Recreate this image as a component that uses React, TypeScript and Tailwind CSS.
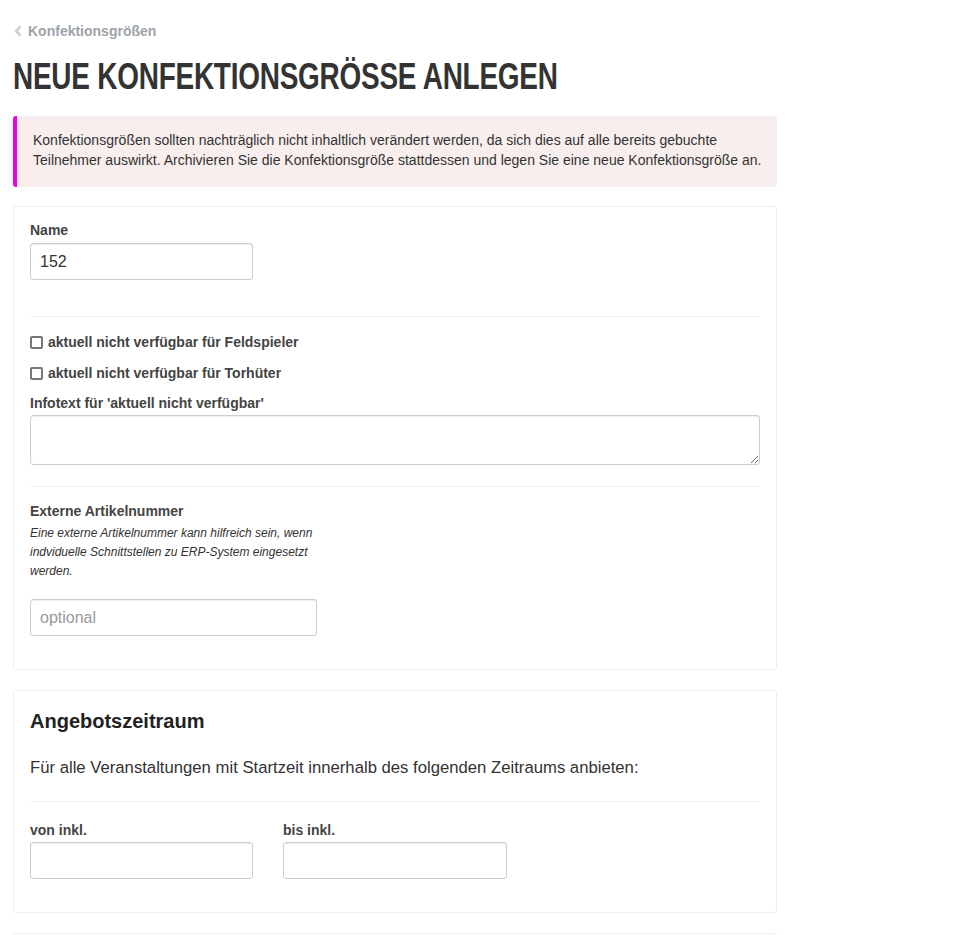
import React from 'react';

const font = { fontFamily: '"Liberation Sans", Arial, sans-serif' };

function Checkbox({ label }: { label: string }) {
  return (
    <label className="flex items-center h-5 text-sm font-bold text-[#444]">
      <span className="w-[13px] h-[13px] border-2 border-[#777] rounded-[2px] bg-white mr-[5px] shrink-0" />
      {label}
    </label>
  );
}

export default function App() {
  return (
    <div className="min-h-[935px] bg-white text-[#333]" style={font}>
      <div className="w-[764px] ml-[13px] pt-[21px]">
        <a className="flex items-center h-5 text-sm font-bold text-[#9ea3aa]">
          <svg width="9" height="12" viewBox="0 0 9 12" className="ml-px mr-[5px]">
            <path d="M6.5 1.5 L2.2 6 L6.5 10.5" fill="none" stroke="#d0d0d0" strokeWidth="2.6" />
          </svg>
          Konfektionsgrößen
        </a>

        <h1 className="mt-[11px] h-[48px] flex items-center text-[37px] font-bold text-[#333] leading-none whitespace-nowrap origin-left scale-x-[0.755] tracking-[-0.3px]">
          NEUE KONFEKTIONSGRÖSSE ANLEGEN
        </h1>

        <div className="mt-[16px] bg-[#f7eeed] border-l-4 border-[#f000e8] rounded-[3px] pl-[16px] pr-[6px] pt-[14px] pb-[17px] text-sm leading-5 text-[#333]">
          Konfektionsgrößen sollten nachträglich nicht inhaltlich verändert werden, da sich dies auf alle bereits gebuchte
          Teilnehmer auswirkt. Archivieren Sie die Konfektionsgröße stattdessen und legen Sie eine neue Konfektionsgröße an.
        </div>

        <div className="mt-[19px] border border-[#eeeeee] rounded-[3px] px-4 pt-[13px] pb-[33px]">
          <label className="block text-sm font-bold leading-5 text-[#444]">Name</label>
          <input
            defaultValue="152"
            className="mt-[3px] block w-[223px] h-[37px] border border-[#ccc] rounded-[3px] px-[9px] text-base text-[#333] shadow-[inset_0_1px_1px_rgba(0,0,0,0.075)] outline-none"
          />
          <hr className="mt-[36px] border-0 border-t border-[#eee]" />
          <div className="mt-[15px] flex flex-col gap-[11px]">
            <Checkbox label="aktuell nicht verfügbar für Feldspieler" />
            <Checkbox label="aktuell nicht verfügbar für Torhüter" />
          </div>
          <label className="mt-[10px] block text-sm font-bold leading-5 text-[#444]">Infotext für 'aktuell nicht verfügbar'</label>
          <textarea className="mt-[2px] block w-full h-[50px] border border-[#ccc] rounded-[3px] shadow-[inset_0_1px_1px_rgba(0,0,0,0.075)] outline-none" />
          <hr className="mt-[21px] border-0 border-t border-[#eee]" />
          <label className="mt-[14px] block text-sm font-bold leading-5 text-[#444]">Externe Artikelnummer</label>
          <p className="mt-[3px] w-[290px] text-xs italic leading-[19px] text-[#333]">
            Eine externe Artikelnummer kann hilfreich sein, wenn indviduelle Schnittstellen zu ERP-System eingesetzt werden.
          </p>
          <input
            placeholder="optional"
            className="mt-[18px] block w-[287px] h-[37px] border border-[#ccc] rounded-[3px] px-[9px] text-base placeholder:text-[#999] shadow-[inset_0_1px_1px_rgba(0,0,0,0.075)] outline-none"
          />
        </div>

        <div className="mt-[20px] border border-[#eeeeee] rounded-[3px] px-4 pt-[17px] pb-[33px]">
          <h3 className="text-xl font-bold leading-[26px] text-[#222]">Angebotszeitraum</h3>
          <p className="mt-[22px] text-[16.7px] leading-[24px] text-[#333]">
            Für alle Veranstaltungen mit Startzeit innerhalb des folgenden Zeitraums anbieten:
          </p>
          <hr className="mt-[21px] border-0 border-t border-[#eee]" />
          <div className="mt-[18px] flex gap-[30px]">
            <div>
              <label className="block text-sm font-bold leading-5 text-[#444]">von inkl.</label>
              <input className="mt-[2px] block w-[223px] h-[37px] border border-[#ccc] rounded-[3px] shadow-[inset_0_1px_1px_rgba(0,0,0,0.075)] outline-none" />
            </div>
            <div>
              <label className="block text-sm font-bold leading-5 text-[#444]">bis inkl.</label>
              <input className="mt-[2px] block w-[224px] h-[37px] border border-[#ccc] rounded-[3px] shadow-[inset_0_1px_1px_rgba(0,0,0,0.075)] outline-none" />
            </div>
          </div>
        </div>

        <div className="mt-[20px] h-[40px] border border-[#eeeeee] rounded-[3px]" />
      </div>
    </div>
  );
}
